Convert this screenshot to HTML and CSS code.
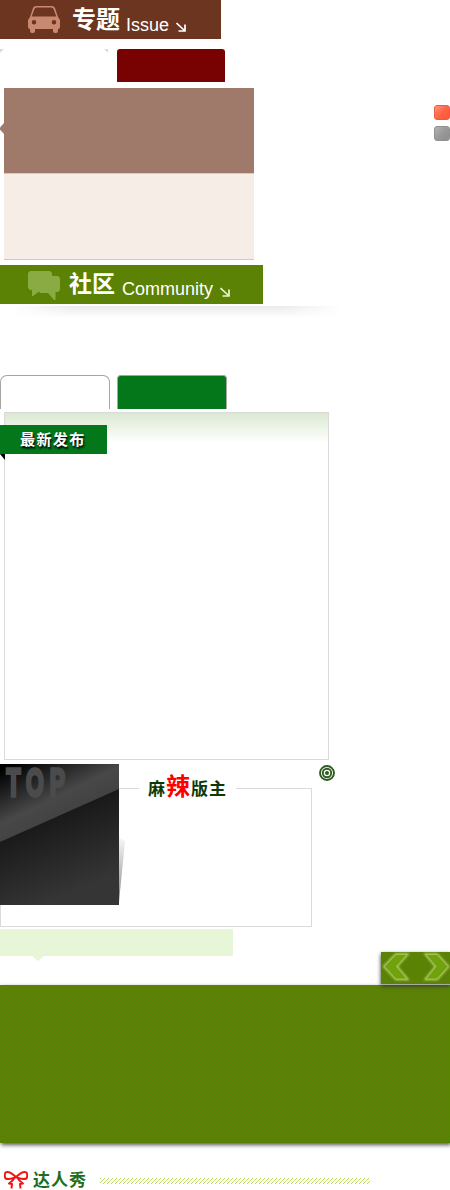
FILE: index.html
```html
<!DOCTYPE html>
<html lang="zh-CN">
<head>
<meta charset="utf-8">
<title>专题 社区</title>
<link rel="stylesheet" href="styles.css">
</head>
<body>
<main class="page">
  <header class="banner banner-issue">
    <svg class="banner-icon" width="32" height="27" viewBox="0 0 32 27"><path fill="#c98870" fill-rule="evenodd" d="M8 0H24Q26 0 27 2L30 11L32 14V21Q32 23 30 23V25Q30 27 28 27H27Q25 27 25 25V23H7V25Q7 27 5 27H4Q2 27 2 25V23Q0 23 0 21V14L2 11L5 2Q6 0 8 0ZM8.500 1.500Q7 1.500 6.500 3L3.700 10.500H28.300L25.500 3Q25 1.500 23.500 1.500ZM6 14A2 2 0 1 0 6 18.500A2 2 0 1 0 6 14ZM26 14A2 2 0 1 0 26 18.500A2 2 0 1 0 26 14Z"/></svg>
    <h2 class="banner-title">专题</h2>
    <span class="banner-sub">Issue</span>
    <svg class="banner-arrow" width="10" height="10" viewBox="0 0 10 10"><path d="M.5 1L8 8M9 2.500V9H2.500" fill="none" stroke="#fff" stroke-width="1.700"/></svg>
  </header>

  <nav class="tabs tabs-issue"><span class="tab"></span><span class="tab tab-on"></span></nav>

  <section class="issue-row">
    <svg class="issue-notch" width="4" height="11" viewBox="0 0 4 11"><path d="M4 0V11L0 6.500V4.500Z" fill="#9f796a"/></svg>
    <div class="issue-card"><div class="issue-top"></div><div class="issue-bottom"></div></div>
    <div class="bullets"><i class="bullet bullet-on"></i><i class="bullet"></i></div>
  </section>

  <header class="banner banner-community">
    <svg class="banner-icon" width="32" height="29" viewBox="0 0 32 29"><path fill="#8aab43" d="M2 0H22L24 2V5H30L32 7V19L30 21H27.500V29H26L20 22H12L11 20.500L5 25H4V19H2L0 17V2Z"/></svg>
    <h2 class="banner-title">社区</h2>
    <span class="banner-sub">Community</span>
    <svg class="banner-arrow" width="10" height="10" viewBox="0 0 10 10"><path d="M.5 1L8 8M9 2.500V9H2.500" fill="none" stroke="#e9f5cb" stroke-width="1.700"/></svg>
  </header>
  <div class="soft-shadow"></div>

  <nav class="tabs tabs-community"><span class="tab"></span><span class="tab tab-on"></span></nav>

  <section class="latest">
    <h3 class="ribbon">最新发布</h3>
  </section>

  <section class="rank-row">
    <div class="rank">
      <h3 class="rank-title">麻<em>辣</em>版主</h3>
      <div class="top-card"><svg width="125" height="141" viewBox="0 0 125 141">
        <defs>
          <linearGradient id="base" x1="0" y1="0" x2=".35" y2="1"><stop offset=".3" stop-color="#101010"/><stop offset="1" stop-color="#353535"/></linearGradient>
          <linearGradient id="shine" gradientUnits="userSpaceOnUse" x1="14" y1="0" x2="44" y2="62"><stop offset="0" stop-color="#000"/><stop offset=".7" stop-color="#484848"/><stop offset="1" stop-color="#424242"/></linearGradient>
          <linearGradient id="curl" x1="0" y1="0" x2="0" y2="1"><stop offset="0" stop-color="#f8f8f8"/><stop offset=".7" stop-color="#aaa"/><stop offset="1" stop-color="#777"/></linearGradient>
        </defs>
        <path d="M119 73L125 77L119 138Z" fill="url(#curl)"/>
        <path d="M0 0H119V141H0Z" fill="url(#base)"/>
        <path d="M0 0H119V25L0 78Z" fill="url(#shine)"/>
        <text class="top-text" transform="translate(6.500 31.500) scale(.6 1)">TOP</text>
      </svg></div>
    </div>
    <svg class="target" width="16" height="16" viewBox="0 0 16 16"><g fill="none" stroke="#2e5b20" stroke-width="1.900"><circle cx="8" cy="8" r="7"/><circle cx="8" cy="8" r="4.200"/></g><circle cx="8" cy="8" r="2" fill="#2e5b20"/></svg>
  </section>

  <div class="tip"></div>

  <section class="show">
    <div class="pager"><svg width="69" height="32" viewBox="0 0 69 32">
      <defs><filter id="glow" x="-30%" y="-30%" width="160%" height="160%"><feGaussianBlur stdDeviation="1.300"/></filter></defs>
      <g fill="none" stroke="#b5cc6a" stroke-width="2.500" filter="url(#glow)"><path d="M26 2.500H15L3.500 14.500L15 27H26L15.500 14.500Z"/><path d="M45 2.500H56L67 14.500L56 27H45L55 14.500Z"/></g>
      <g fill="#70a30b" stroke="#a9c45c" stroke-width=".8"><path d="M26 2.500H15L3.500 14.500L15 27H26L15.500 14.500Z"/><path d="M45 2.500H56L67 14.500L56 27H45L55 14.500Z"/></g>
    </svg></div>
    <div class="show-band"><svg width="450" height="158" shape-rendering="crispEdges"><defs><pattern id="weave" width="4" height="4" patternUnits="userSpaceOnUse"><path fill="#627c0a" d="M0 3h1v1H0zM1 2h1v1H1zM2 1h1v1H2zM3 0h1v1H3z"/></pattern></defs><path d="M0 0H450V158H0Z" fill="url(#weave)"/></svg></div>
  </section>

  <footer class="talent">
    <svg class="bow" width="24" height="18" viewBox="0 0 24 18"><g fill="none" stroke="#f31414" stroke-width="2" stroke-linejoin="round"><path d="M12 6Q5 -.5 1.500 1.500Q0 4 1.500 7.500Q6 9 12 6Q19 -.5 22.500 1.500Q24 4 22.500 7.500Q18 9 12 6"/><path d="M11 6Q9 10 5 12.500L8 13L7.500 17.500M13 6Q15 10 19 12.500L16 13L16.500 17.500"/></g></svg>
    <h3 class="talent-title">达人秀</h3>
    <svg class="hatch" width="272" height="6" viewBox="0 0 272 6" shape-rendering="crispEdges"><defs><pattern id="slash" width="4" height="6" patternUnits="userSpaceOnUse"><path fill="#bedb6a" d="M0 5h1v1H0zM1 4h1v1H1zM2 3h1v1H2zM3 2h1v1H3zM0 1h1v1H0zM1 0h1v1H1z"/></pattern></defs><path d="M1 0H271V6H1Z" fill="url(#slash)"/></svg>
  </footer>
</main>
</body>
</html>
```
FILE: styles.css
```css
* { box-sizing: border-box; }
body { margin: 0; background: #fff; font-family: "Liberation Sans", "Noto Sans CJK SC", sans-serif; }
h2, h3 { margin: 0; }
svg { display: block; flex: none; }
.page { width: 450px; height: 1190px; overflow: hidden; display: flex; flex-direction: column; align-items: flex-start; }

.banner { display: flex; align-items: flex-start; height: 39px; padding-left: 28px; color: #fff; flex: none; }
.banner-issue { width: 221px; background: #6c3520; }
.banner-community { width: 263px; background: #5c8205; margin-top: 5px; }
.banner-icon { margin-top: 6px; }
.banner-title { margin-left: 12px; width: 48px; font: bold 24px/36px "Noto Sans CJK SC", sans-serif; white-space: nowrap; }
.banner-community .banner-title { margin: -1px 0 0 9px; width: 47px; font-size: 23px; }
.banner-sub { margin: 14px 0 0 6px; font-size: 18px; line-height: 22px; }
.banner-community .banner-sub { margin-left: 6px; margin-top: 13px; }
.banner-arrow { margin: 22px 0 0 7px; }

.tabs { display: flex; flex: none; }
.tabs-issue { gap: 9px; height: 33px; margin-top: 10px; }
.tabs-issue .tab { width: 108px; }
.tabs-issue .tab:first-child { background: linear-gradient(135deg, #e6d8c9 2.5px, transparent 3px) 0 0 / 4px 4px no-repeat, linear-gradient(225deg, #e6d8c9 2.5px, transparent 3px) 100% 0 / 4px 4px no-repeat; }
.tabs-issue .tab-on { background: #780101; border-radius: 3px 3px 0 0; }
.tabs-community { gap: 7px; height: 34px; margin-top: 57px; }
.tabs-community .tab { width: 110px; border: 1px solid #a5a5a5; border-bottom: 0; border-radius: 7px 7px 0 0; }
.tabs-community .tab-on { background: #04771b; border-radius: 4px 4px 0 0; }

.issue-row { display: flex; width: 450px; height: 172px; margin-top: 6px; flex: none; align-items: flex-start; }
.issue-notch { margin-top: 35px; }
.issue-card { width: 250px; height: 172px; }
.issue-top { height: 85px; background: #9f796a; }
.issue-bottom { height: 87px; background: #f6ede6; border-top: 1px solid #d8c9c0; border-bottom: 1px solid #ccc9c7; }
.bullets { margin: 17px 0 0 auto; display: grid; gap: 6px; }
.bullet { width: 16px; height: 15px; border-radius: 3px; border: 1px solid #909090; background: linear-gradient(135deg, #b2b2b2, #999 50%, #8e8e8e); }
.bullet-on { border-color: #ef5b40; background: linear-gradient(135deg, #ff957d, #ff6545 50%, #ff5434); }

.soft-shadow { width: 330px; height: 12px; margin: 2px 0 0 12px; background: linear-gradient(90deg, #fff, transparent 18%, transparent 82%, #fff), linear-gradient(#ebebeb, #fff); flex: none; }

.latest { position: relative; width: 325px; height: 348px; margin: 3px 0 0 4px; border: 1px solid #dadada; background: linear-gradient(#dbe9d1, #fff 30px); flex: none; }
.ribbon { position: absolute; left: -5px; top: 12px; width: 107px; height: 29px; padding-left: 20px; background: #04771b; color: #fff; font: bold 15px/27px "Noto Sans CJK SC", sans-serif; letter-spacing: 1.4px; text-shadow: 1px 2px 2px #000; }
.ribbon::after { content: ""; position: absolute; left: 0; top: 29px; width: 5px; height: 6px; background: #000; clip-path: polygon(0 0, 100% 0, 100% 100%); }

.rank-row { display: flex; align-items: flex-start; gap: 7px; margin-top: 4px; height: 163px; flex: none; }
.rank { position: relative; width: 312px; height: 139px; margin-top: 24px; border: 1px solid #dadada; }
.rank-title { position: absolute; left: 138px; top: -19px; width: 97px; height: 34px; padding-left: 9px; background: #fff; color: #0d3907; font: bold 17px/34px "Noto Sans CJK SC", sans-serif; letter-spacing: 1px; white-space: nowrap; }
.rank-title em { font-size: 24px; font-style: normal; color: #f00; line-height: 30px; }
.top-card { position: absolute; left: -1px; top: -25px; }
.top-text { font: bold 38px "Liberation Sans", sans-serif; letter-spacing: 10px; fill: #4b4b4b; stroke: #4b4b4b; stroke-width: 3.5px; }
.target { margin-top: 1px; }

.tip { position: relative; width: 233px; height: 27px; margin-top: 2px; background: #e7f6d7; flex: none; }
.tip::after { content: ""; position: absolute; left: 32px; top: 27px; width: 12px; height: 5px; background: #e7f6d7; clip-path: polygon(0 0, 100% 0, 50% 100%); }

.show { position: relative; width: 450px; height: 191px; margin-top: -4px; padding-top: 33px; flex: none; }
.show-band { height: 158px; background: #548604; box-shadow: 1px 2px 4px #555; }
.pager { position: absolute; right: 0; top: 0; width: 69px; height: 32px; background: #5a8205; box-shadow: 0 1px 0 #aaa, 0 2px 4px #333; z-index: 1; }

.talent { display: flex; align-items: flex-start; height: 20px; padding-left: 4px; margin-top: 27px; flex: none; }
.bow { margin-top: 1px; }
.talent-title { margin: -1px 0 0 5px; width: 54px; height: 20px; color: #1d6e1c; font: bold 17px/20px "Noto Sans CJK SC", sans-serif; letter-spacing: 1px; white-space: nowrap; }
.hatch { margin: 8px 0 0 12px; }
```
